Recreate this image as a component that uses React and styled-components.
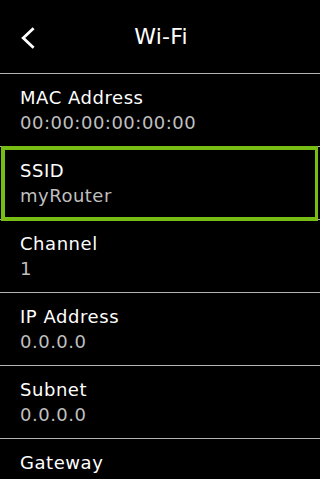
import React from "react";
import styled, { createGlobalStyle } from "styled-components";

const Global = createGlobalStyle`
  html, body { margin: 0; padding: 0; background: #000; }
  body { font-family: "DejaVu Sans", "Liberation Sans", sans-serif; -webkit-font-smoothing: antialiased; }
  #root { width: 320px; height: 479px; overflow: hidden; background: #000; }
`;

const Screen = styled.div`
  width: 320px;
  height: 479px;
  background: #000;
  color: #fff;
  display: flex;
  flex-direction: column;
  overflow: hidden;
`;

const Header = styled.header`
  position: relative;
  height: 73px;
  flex: none;
  display: flex;
  align-items: center;
  justify-content: center;
  border-bottom: 1px solid #b4b4b4;
`;

const BackButton = styled.button`
  position: absolute;
  left: 21px;
  top: 27px;
  width: 15px;
  height: 22px;
  padding: 0;
  margin: 0;
  border: 0;
  background: transparent;
  display: flex;
`;

const Title = styled.h1`
  margin: 0;
  font-size: 22px;
  font-weight: 400;
  line-height: 1;
  letter-spacing: 0.2px;
  padding-left: 2px;
  color: #fff;
`;

const List = styled.div`
  display: flex;
  flex-direction: column;
`;

const Row = styled.div`
  position: relative;
  height: 72px;
  flex: none;
  box-sizing: content-box;
  border-bottom: 1px solid #b4b4b4;
  padding: 0 20px;
  display: flex;
  flex-direction: column;
  justify-content: flex-start;

  &::after {
    content: "";
    display: ${(p) => (p.$selected ? "block" : "none")};
    position: absolute;
    top: -1px;
    left: 1px;
    right: 2px;
    bottom: -2px;
    border: 4px solid #78bc16;
    border-right-width: 3px;
    z-index: 1;
    pointer-events: none;
  }
`;

const Label = styled.div`
  margin-top: 12px;
  font-size: 18px;
  line-height: 24px;
  letter-spacing: 0.55px;
  color: #fff;
  white-space: nowrap;
`;

const Value = styled.div`
  font-size: 18px;
  line-height: 25px;
  letter-spacing: 0.5px;
  color: #bfbfbf;
  white-space: nowrap;
`;

const rows = [
  { label: "MAC Address", value: "00:00:00:00:00:00" },
  { label: "SSID", value: "myRouter", selected: true },
  { label: "Channel", value: "1" },
  { label: "IP Address", value: "0.0.0.0" },
  { label: "Subnet", value: "0.0.0.0" },
  { label: "Gateway" },
];

export default function App() {
  return (
    <>
      <Global />
      <Screen>
        <Header>
          <BackButton aria-label="Back">
            <svg width="15" height="22" viewBox="0 0 15 22">
              <polyline
                points="12.6,1.2 2.2,11 12.6,20.8"
                fill="none"
                stroke="#fff"
                strokeWidth="2.8"
                strokeLinecap="butt"
                strokeLinejoin="miter"
              />
            </svg>
          </BackButton>
          <Title>Wi-Fi</Title>
        </Header>
        <List>
          {rows.map((r) => (
            <Row key={r.label} $selected={r.selected}>
              <Label>{r.label}</Label>
              {r.value && <Value>{r.value}</Value>}
            </Row>
          ))}
        </List>
      </Screen>
    </>
  );
}
